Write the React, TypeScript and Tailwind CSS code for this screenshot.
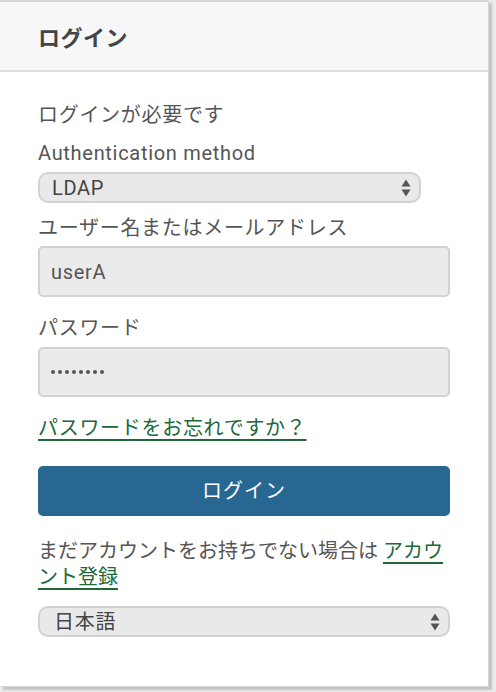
import React from 'react';

const Arrows: React.FC = () => (
  <svg width="10" height="18" viewBox="0 0 10 18" className="shrink-0">
    <path d="M5 0.5 L9.5 7.5 L0.5 7.5 Z" fill="#555" />
    <path d="M5 17.5 L9.5 10.5 L0.5 10.5 Z" fill="#555" />
  </svg>
);

const App: React.FC = () => {
  return (
    <div className="w-[496px] h-[692px] bg-[#ececec] overflow-hidden font-[Roboto,'Noto_Sans_CJK_JP',sans-serif] text-[#555]">
      <div className="w-[489px] h-[687px] bg-white border-t-2 border-r border-b border-[#d6d6d6] shadow-[3px_3px_2px_rgba(0,0,0,0.18)] flex flex-col">
        {/* Header */}
        <div className="h-[70px] bg-[#f7f7f7] border-b-2 border-[#dedede] flex items-center px-[38px] shrink-0">
          <h1 className="text-[22px] font-bold text-[#444] tracking-[0.5px] pt-[4px]">ログイン</h1>
        </div>

        {/* Body */}
        <div className="pl-[38px] pr-[38px] pt-[30px] flex flex-col text-[20px] leading-[26px] tracking-[0.7px]">
          <p>ログインが必要です</p>

          <label className="mt-[12px]">Authentication method</label>
          <div className="mt-[6px] w-[383px] h-[31px] bg-[#e9e9e9] border-2 border-[#d2d2d2] rounded-[10px] flex items-center justify-between pl-[12px] pr-[8px]">
            <span className="text-[#444]">LDAP</span>
            <Arrows />
          </div>

          <label className="mt-[12px]">ユーザー名またはメールアドレス</label>
          <div className="mt-[5px] h-[51px] bg-[#ebebeb] border-2 border-[#d2d2d2] rounded-[5px] flex items-center px-[11px]">
            <span>userA</span>
          </div>

          <label className="mt-[18px]">パスワード</label>
          <div className="mt-[6px] h-[50px] bg-[#ebebeb] border-2 border-[#d2d2d2] rounded-[5px] flex items-center gap-[3px] px-[11px]">
            {[0, 1, 2, 3, 4, 5, 6, 7].map((i) => (
              <span key={i} className="w-[4px] h-[4px] rounded-full bg-[#555]" />
            ))}
          </div>

          <a href="#" className="mt-[18px] self-start text-[#20683a] underline decoration-2 underline-offset-[4px]">
            パスワードをお忘れですか？
          </a>

          <button className="mt-[25px] h-[50px] bg-[#276792] rounded-[5px] text-white text-[20px] tracking-[1px]">
            ログイン
          </button>

          <p className="mt-[22px] tracking-normal">
            <span className="whitespace-nowrap">まだアカウントをお持ちでない場合は </span>
            <a href="#" className="text-[#20683a] underline decoration-2 underline-offset-[4px]">
              アカウ
              <br />
              ント登録
            </a>
          </p>

          <div className="mt-[16px] h-[31px] bg-[#e9e9e9] border-2 border-[#d2d2d2] rounded-[10px] flex items-center justify-between pl-[14px] pr-[8px]">
            <span className="text-[#444]">日本語</span>
            <Arrows />
          </div>
        </div>
      </div>
    </div>
  );
};

export default App;
